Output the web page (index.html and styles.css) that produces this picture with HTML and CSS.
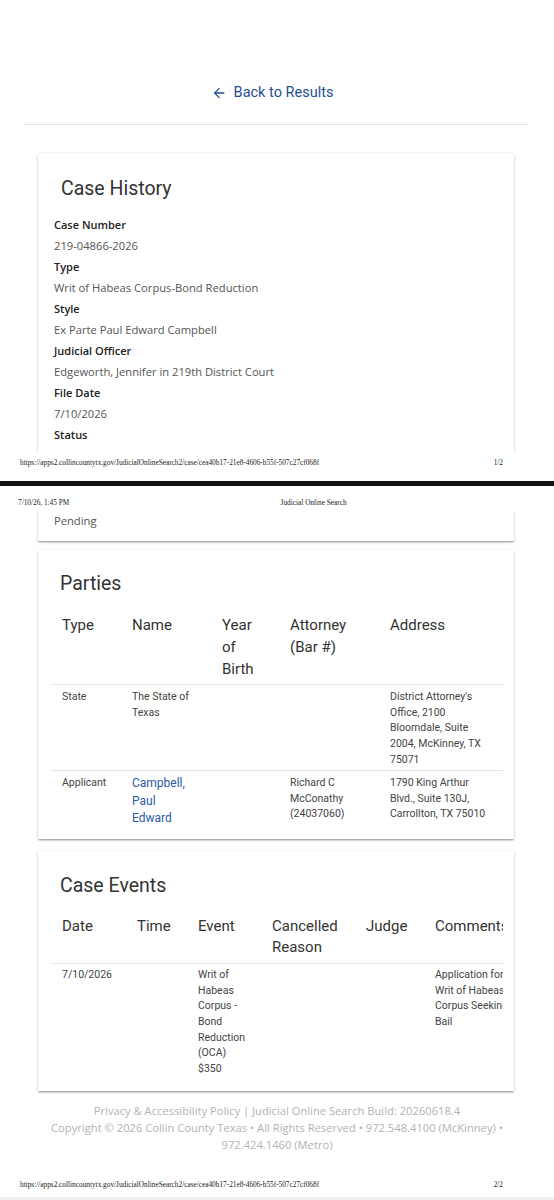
FILE: index.html
```html
<!DOCTYPE html>
<html lang="en">
    <head>
        <meta charset="UTF-8" />
        <meta name="viewport" content="width=device-width, initial-scale=1.0" />
        <title>Judicial Online Search</title>
        <link rel="stylesheet" href="styles.css">
    </head>
    <body>
        <div class="sheet sheet-first">
            <div class="masthead"><span>Judicial Online Search</span></div>
            <nav class="back">
                <a href="#">
                    <svg viewBox="0 0 24 24" aria-hidden="true">
                        <path d="M20 11H7.83l5.59-5.59L12 4l-8 8 8 8 1.41-1.41L7.83 13H20v-2z" />
                    </svg>
                    Back to Results
                </a>
            </nav>
            <hr class="rule" />
            <section class="card card-cut-bottom history">
                <h2>Case History</h2>
                <dl>
                    <dt>Case Number</dt>
                    <dd>219-04866-2026</dd>
                    <dt>Type</dt>
                    <dd>Writ of Habeas Corpus-Bond Reduction</dd>
                    <dt>Style</dt>
                    <dd>Ex Parte Paul Edward Campbell</dd>
                    <dt>Judicial Officer</dt>
                    <dd>Edgeworth, Jennifer in 219th District Court</dd>
                    <dt>File Date</dt>
                    <dd>7/10/2026</dd>
                    <dt>Status</dt>
                </dl>
            </section>
            <footer class="print-foot">
                <span>https://apps2.collincountytx.gov/JudicialOnlineSearch2/case/cea40b17-21e8-4606-b55f-507c27cf068f</span>
                <span>1/2</span>
            </footer>
        </div>

        <div class="page-break"></div>

        <div class="sheet">
            <header class="print-head">
                <span>7/10/26, 1:45 PM</span>
                <span class="print-title">Judicial Online Search</span>
            </header>
            <section class="card card-cut-top history-rest">
                <p>Pending</p>
            </section>

            <section class="card table-card">
                <h2>Parties</h2>
                <div class="table-wrap">
                    <table class="parties">
                        <colgroup>
                            <col style="width: 70px" />
                            <col style="width: 90px" />
                            <col style="width: 68px" />
                            <col style="width: 100px" />
                            <col style="width: 124px" />
                        </colgroup>
                        <thead>
                            <tr>
                                <th>Type</th>
                                <th>Name</th>
                                <th>Year of Birth</th>
                                <th>Attorney (Bar #)</th>
                                <th>Address</th>
                            </tr>
                        </thead>
                        <tbody>
                            <tr>
                                <td>State</td>
                                <td class="name-cell">The State of Texas</td>
                                <td></td>
                                <td></td>
                                <td>District Attorney's Office, 2100 Bloomdale, Suite 2004, McKinney, TX 75071</td>
                            </tr>
                            <tr>
                                <td>Applicant</td>
                                <td class="name-cell"><a class="party-link" href="#">Campbell, Paul Edward</a></td>
                                <td></td>
                                <td>Richard C McConathy (24037060)</td>
                                <td>1790 King Arthur Blvd., Suite 130J, Carrollton, TX 75010</td>
                            </tr>
                        </tbody>
                    </table>
                </div>
            </section>

            <section class="card table-card events-card">
                <h2>Case Events</h2>
                <div class="table-wrap">
                    <table class="events">
                        <colgroup>
                            <col style="width: 75px" />
                            <col style="width: 61px" />
                            <col style="width: 74px" />
                            <col style="width: 94px" />
                            <col style="width: 69px" />
                            <col style="width: 100px" />
                        </colgroup>
                        <thead>
                            <tr>
                                <th>Date</th>
                                <th>Time</th>
                                <th>Event</th>
                                <th>Cancelled Reason</th>
                                <th>Judge</th>
                                <th>Comments</th>
                            </tr>
                        </thead>
                        <tbody>
                            <tr>
                                <td>7/10/2026</td>
                                <td></td>
                                <td>Writ of Habeas Corpus - Bond Reduction (OCA) $350</td>
                                <td></td>
                                <td></td>
                                <td>Application for Writ of Habeas Corpus Seeking Bail</td>
                            </tr>
                        </tbody>
                    </table>
                </div>
            </section>

            <footer class="site-foot">
                <div>Privacy &amp; Accessibility Policy | Judicial Online Search Build: 20260618.4</div>
                <div>Copyright © 2026 Collin County Texas • All Rights Reserved • 972.548.4100 (McKinney) • 972.424.1460 (Metro)</div>
            </footer>
            <footer class="print-foot print-foot-last">
                <span>https://apps2.collincountytx.gov/JudicialOnlineSearch2/case/cea40b17-21e8-4606-b55f-507c27cf068f</span>
                <span>2/2</span>
            </footer>
        </div>
    </body>
</html>
```

FILE: styles.css
```css
* {
    padding: 0;
    margin: 0;
    box-sizing: border-box;
}
html {
    background-color: #f1f1f1;
}
body {
    width: 554px;
    background-color: #ffffff;
    font-family: Roboto, 'Noto Sans', sans-serif;
    color: #333;
}

/* printed sheets */
.sheet {
    display: flex;
    flex-direction: column;
}
.sheet-first {
    height: 481px;
    padding-bottom: 13px;
}
.page-break {
    height: 5px;
    background-color: #111;
}
.print-head,
.print-foot {
    display: flex;
    font-family: 'Liberation Serif', serif;
    font-size: 7.3px;
    line-height: 10px;
    color: #222;
}
.print-head {
    padding: 12px 0 0 18px;
}
.print-title {
    margin: 0 auto;
    padding-left: 4px;
}
.print-foot {
    margin-top: auto;
    justify-content: space-between;
    padding: 0 51px 0 20px;
}
.print-foot-last {
    margin-top: 27px;
    padding-bottom: 7px;
}

.masthead {
    height: 3px;
    overflow: hidden;
    text-align: center;
}
.masthead span {
    display: block;
    font-size: 15px;
    line-height: 15px;
    margin-top: -12px;
    color: #dddddd;
}

/* back link */
.back {
    padding: 79px 10px 0 0;
    text-align: center;
}
.back a {
    display: inline-flex;
    align-items: center;
    gap: 7px;
    color: #1f4e94;
    text-decoration: none;
    font-size: 14.5px;
    line-height: 22px;
}
.back svg {
    width: 16px;
    height: 16px;
    fill: currentColor;
}
.rule {
    border: 0;
    border-top: 1px solid #e3e3e3;
    margin: 19px 25px 0 24px;
}

/* cards */
.card {
    background-color: #ffffff;
    margin: 0 40px 0 38px;
    box-shadow: 0 2px 2px -1px rgba(0, 0, 0, 0.22),
        0 1px 1px 0 rgba(0, 0, 0, 0.12),
        0 1px 3px 0 rgba(0, 0, 0, 0.16);
}
.card h2 {
    font-size: 19.5px;
    line-height: 28px;
    font-weight: 400;
    color: #333;
}
.card-cut-bottom {
    clip-path: inset(-6px -6px 0 -6px);
}
.card-cut-top {
    clip-path: inset(0 -6px -6px -6px);
}

.history {
    margin-top: 28px;
    padding: 22px 16px 8px;
}
.history h2 {
    margin: 0 0 11px 7px;
}
.history dt,
.history dd,
.history-rest p {
    font-family: 'Open Sans', sans-serif;
    line-height: 21px;
}
.history dt {
    font-weight: 600;
    font-size: 11px;
    color: #222;
}
.history dd,
.history-rest p {
    font-size: 11.2px;
    color: #555;
}
.history-rest {
    margin-top: 2px;
    padding: 0 16px 10px;
}

/* tables */
.table-card {
    margin-top: 9px;
    padding: 20px 11px 8px 13px;
}
.table-card h2 {
    margin: 0 0 17px 9px;
}
.events-card {
    margin-top: 12px;
    padding-top: 21px;
    padding-bottom: 12px;
}
.events-card h2 {
    margin-bottom: 16px;
}
.table-wrap {
    overflow: hidden;
}
table {
    table-layout: fixed;
    border-collapse: collapse;
}
.parties {
    width: 452px;
}
.events {
    width: 473px;
}
th {
    text-align: left;
    vertical-align: top;
    font-weight: 400;
    font-size: 15px;
    line-height: 21.75px;
    color: #333;
    padding: 0 11px 4px;
    border-bottom: 1px solid #e4e4e4;
}
td {
    vertical-align: top;
    font-size: 10.5px;
    line-height: 15.6px;
    color: #444;
    padding: 4px 11px 3px;
}
tbody tr:not(:last-child) td {
    border-bottom: 1px solid #e4e4e4;
}
.parties td.name-cell {
    padding-right: 18px;
}
.events td {
    padding-top: 3px;
}
.party-link {
    display: block;
    font-size: 12px;
    line-height: 17.5px;
    color: #2a5aa5;
    text-decoration: none;
}

.site-foot {
    margin-top: 11px;
    padding: 0 40px;
    text-align: center;
    font-family: 'Open Sans', sans-serif;
    font-size: 11.2px;
    line-height: 17px;
    color: #b3b3b3;
}
```
